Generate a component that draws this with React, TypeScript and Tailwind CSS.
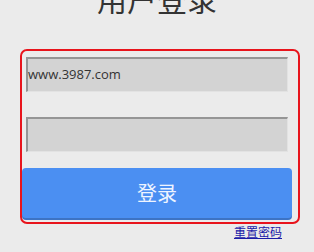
import React from "react";

export default function App() {
  const cjk = { fontFamily: '"Noto Sans CJK SC", "Noto Sans", sans-serif' };
  return (
    <div className="w-[314px] h-[252px] overflow-hidden bg-[#ebebeb]" style={cjk}>
      <div className="h-[30px] -mt-[17px] text-center text-[30px] leading-[30px] text-[#333]">用户登录</div>
      <div className="ml-[20px] mt-[36px] w-[280px] h-[175px] border-2 border-[#e8141c] rounded-[7px] pt-[6px] pr-[6px]">
        <div className="ml-[4px] w-[262px] h-[35px] bg-[#d3d3d3] border-t-2 border-l-2 border-[#959595] border-r border-b border-r-[#e2e2e2] border-b-[#e2e2e2] flex items-center text-[13px] text-[#333]" style={{ fontFamily: '"Open Sans", "Noto Sans", sans-serif' }}>
          www.3987.com
        </div>
        <div className="ml-[4px] mt-[25px] w-[262px] h-[35px] bg-[#d3d3d3] border-t-2 border-l-2 border-[#959595] border-r border-b border-r-[#e2e2e2] border-b-[#e2e2e2]" />
        <div className="mt-[16px] h-[50px] w-[270px] rounded-[4px] bg-[#4b8ff2] shadow-[0_2px_0_#3d73c4] flex items-center justify-center text-[20px] text-[#eef4ff]">
          登录
        </div>
      </div>
      <div className="w-[282px] flex justify-end">
        <span className="text-[12px] leading-[16px] text-[#1b1ba8] underline">重置密码</span>
      </div>
    </div>
  );
}
